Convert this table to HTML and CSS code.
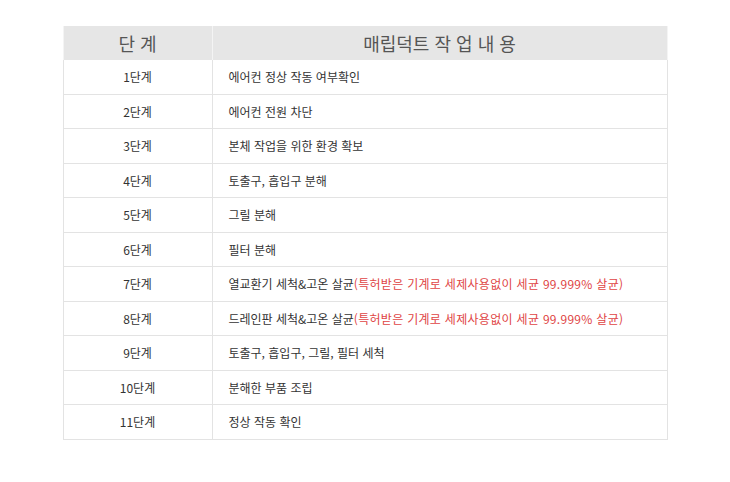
FILE: index.html
```html
<!DOCTYPE html>
<html lang="ko">
<head>
<meta charset="utf-8">
<link rel="stylesheet" href="styles.css">
</head>
<body>
<div class="wrap">
<table class="steps">
<colgroup><col class="c1"><col class="c2"></colgroup>
<thead>
<tr><th>단 계</th><th>매립덕트 작 업 내 용</th></tr>
</thead>
<tbody>
<tr><td class="no">1단계</td><td class="desc">에어컨 정상 작동 여부확인</td></tr>
<tr><td class="no">2단계</td><td class="desc">에어컨 전원 차단</td></tr>
<tr><td class="no">3단계</td><td class="desc">본체 작업을 위한 환경 확보</td></tr>
<tr><td class="no">4단계</td><td class="desc">토출구, 흡입구 분해</td></tr>
<tr><td class="no">5단계</td><td class="desc">그릴 분해</td></tr>
<tr><td class="no">6단계</td><td class="desc">필터 분해</td></tr>
<tr><td class="no">7단계</td><td class="desc">열교환기 세척&amp;고온 살균<span class="red">(특허받은 기계로 세제사용없이 세균 99.999% 살균)</span></td></tr>
<tr><td class="no">8단계</td><td class="desc">드레인판 세척&amp;고온 살균<span class="red">(특허받은 기계로 세제사용없이 세균 99.999% 살균)</span></td></tr>
<tr><td class="no">9단계</td><td class="desc">토출구, 흡입구, 그릴, 필터 세척</td></tr>
<tr><td class="no">10단계</td><td class="desc">분해한 부품 조립</td></tr>
<tr><td class="no">11단계</td><td class="desc">정상 작동 확인</td></tr>
</tbody>
</table>
</div>
</body>
</html>
```
FILE: styles.css
```css
html, body {
  margin: 0;
  padding: 0;
  background: #fff;
}
body {
  font-family: "Noto Sans CJK KR", "Noto Sans", sans-serif;
  color: #333;
}
.wrap {
  padding-top: 26px;
  display: flex;
  justify-content: center;
}
.steps {
  width: 605px;
  border-collapse: collapse;
  table-layout: fixed;
}
.c1 { width: 149px; }
.steps th {
  background: #e6e6e6;
  color: #555;
  font-size: 18px;
  font-weight: normal;
  height: 34px;
  padding: 0;
  border-left: 1px solid #f4f4f4;
  border-right: 1px solid #f4f4f4;
}
.steps td {
  height: 33.5px;
  padding: 0;
  font-size: 12px;
  border: 1px solid #e3e3e3;
  border-top: none;
}
.steps td.no {
  text-align: center;
}
.steps td.desc {
  padding-left: 16px;
}
.red {
  color: #e04545;
  letter-spacing: 0.3px;
}
```
